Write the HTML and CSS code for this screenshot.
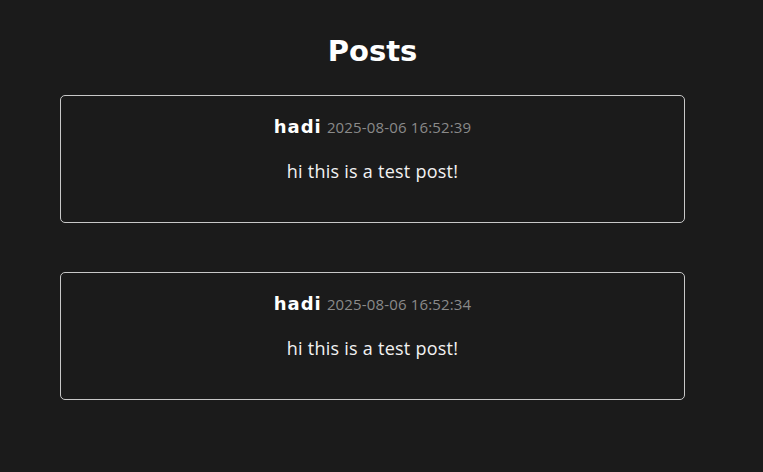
FILE: index.html
```html
<!DOCTYPE html>
<html>
<head>
<meta charset="utf-8">
<link rel="stylesheet" href="styles.css">
</head>
<body>
<main class="page">
  <h1 class="title">Posts</h1>
  <div class="posts">
    <article class="post">
      <div class="meta"><span class="author">hadi</span> <span class="time">2025-08-06 16:52:39</span></div>
      <p class="content">hi this is a test post!</p>
    </article>
    <article class="post">
      <div class="meta"><span class="author">hadi</span> <span class="time">2025-08-06 16:52:34</span></div>
      <p class="content">hi this is a test post!</p>
    </article>
  </div>
</main>
</body>
</html>
```
FILE: styles.css
```css
html, body {
  margin: 0;
  padding: 0;
  background: #1b1b1b;
  height: 100%;
}
body {
  font-family: "DejaVu Sans", sans-serif;
  color: #f2f2f2;
}
.page {
  width: 625px;
  margin-left: 60px;
  padding-top: 35px;
  display: flex;
  flex-direction: column;
  align-items: center;
}
.title {
  margin: 0;
  font-size: 29px;
  font-weight: bold;
  line-height: 32px;
  color: #ffffff;
}
.posts {
  margin-top: 28px;
  width: 100%;
  display: flex;
  flex-direction: column;
  gap: 49px;
}
.post {
  box-sizing: border-box;
  height: 128px;
  border: 1px solid #c8c8c8;
  border-radius: 5px;
  padding-top: 20px;
  display: flex;
  flex-direction: column;
  align-items: center;
}
.meta {
  line-height: 22px;
}
.author {
  font-weight: bold;
  font-size: 18px;
  letter-spacing: 1px;
  color: #fff;
}
.time {
  font-family: "Open Sans", sans-serif;
  font-size: 15px;
  letter-spacing: 0.15px;
  color: #8a8a8a;
}
.content {
  margin: 20px 0 0;
  font-family: "Open Sans", sans-serif;
  font-size: 18px;
  letter-spacing: 0.25px;
  line-height: 24px;
  color: #f2f2f2;
}
```
